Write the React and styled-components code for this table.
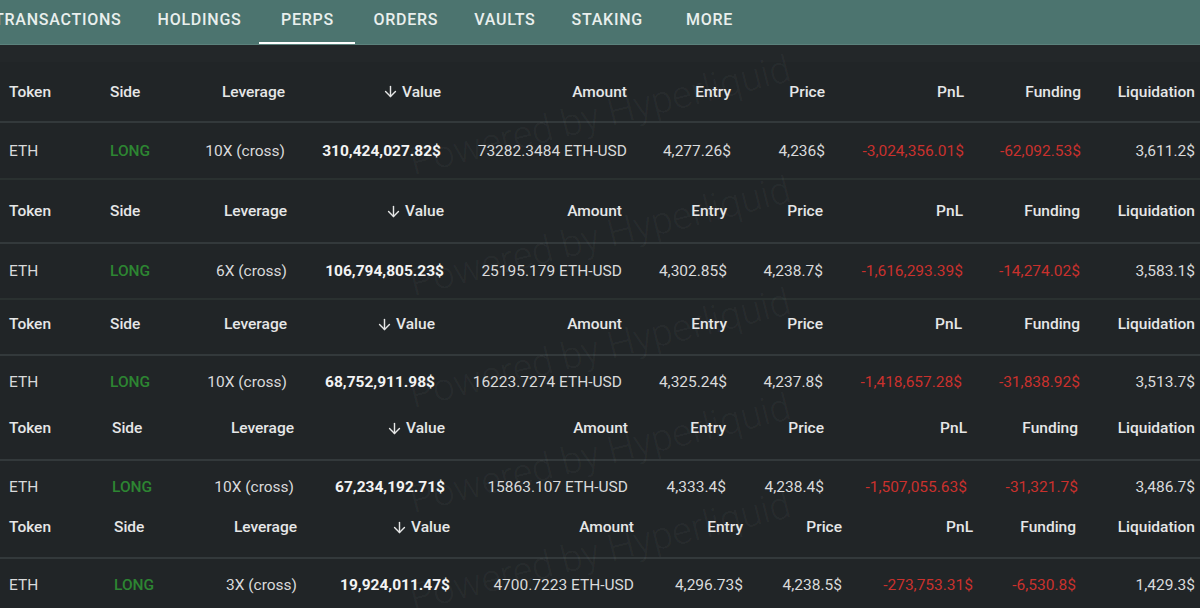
import React from 'react'
import styled, { createGlobalStyle } from 'styled-components'
import { ArrowDown } from 'lucide-react'

const GlobalStyle = createGlobalStyle`
  html, body {
    margin: 0;
    padding: 0;
    background: #212527;
    font-family: Roboto, "Liberation Sans", sans-serif;
  }
  body { overflow: hidden; }
`

const Page = styled.div`
  width: 1200px;
  height: 608px;
  overflow: hidden;
  background: #212527;
`

const TabBar = styled.nav`
  height: 45px;
  display: flex;
  align-items: stretch;
  background: #4c746f;
  border-bottom: 1px solid #5b827c;
  box-sizing: border-box;
  overflow: hidden;
`

const TabList = styled.div`
  display: flex;
  margin-left: -24px;
`

const Tab = styled.div`
  display: flex;
  align-items: center;
  justify-content: center;
  padding: 0 18px 4px;
  margin-left: ${p => p.extra || 0}px;
  font-size: 16px;
  font-weight: 500;
  letter-spacing: 0.75px;
  color: #e9efed;
  box-sizing: border-box;
  border-bottom: 3px solid ${p => (p.active ? '#ffffff' : 'transparent')};
  margin-bottom: -1px;
  min-width: ${p => (p.active ? '96px' : 'auto')};
`

const Band = styled.div`
  height: 17px;
  background: #232729;
`

const Block = styled.section`
  position: relative;
  border-top: ${p => (p.topLine ? '2px solid #2a3130' : 'none')};
`

const Row = styled.div`
  display: grid;
  grid-template-columns: ${p => p.cols};
  align-items: center;
  box-sizing: border-box;
  height: ${p => p.h}px;
  padding-bottom: ${p => p.padB || 0}px;
  font-size: 15.5px;
`

const Sep = styled.div`
  height: 2px;
  background: #33393b;
`

const HeadCell = styled.div`
  font-weight: 500;
  color: #e6e7e7;
  white-space: nowrap;
  padding-left: ${p => (p.first ? '9px' : '0')};
  display: flex;
  align-items: center;
  justify-content: ${p => (p.left ? 'flex-start' : 'flex-end')};
  gap: 3px;
`

const Cell = styled.div`
  color: ${p => p.color || '#d9dadb'};
  font-weight: ${p => p.weight || 400};
  white-space: nowrap;
  text-align: ${p => (p.left ? 'left' : 'right')};
  padding-left: ${p => (p.first ? '9px' : '0')};
`

const Watermark = styled.div`
  position: absolute;
  left: 600px;
  top: ${p => p.y}px;
  transform: translate(-50%, -50%) rotate(-14deg);
  font-size: 38px;
  font-weight: 300;
  color: rgba(255, 255, 255, 0.045);
  white-space: nowrap;
  pointer-events: none;
`

const GREEN = '#2d8632'
const RED = '#c9312d'

const blocks = [
  {
    side: 110, ends: [285, 441, 627, 731, 825, 964, 1081, 1195],
    headH: 59, padB: 0, dataH: 55, topLine: false,
    lev: '10X (cross)', value: '310,424,027.82$', amount: '73282.3484 ETH-USD',
    entry: '4,277.26$', price: '4,236$', pnl: '-3,024,356.01$', funding: '-62,092.53$', liq: '3,611.2$',
  },
  {
    side: 110, ends: [287, 444, 622, 727, 823, 963, 1080, 1195],
    headH: 62, padB: 0, dataH: 54, topLine: true,
    lev: '6X (cross)', value: '106,794,805.23$', amount: '25195.179 ETH-USD',
    entry: '4,302.85$', price: '4,238.7$', pnl: '-1,616,293.39$', funding: '-14,274.02$', liq: '3,583.1$',
  },
  {
    side: 110, ends: [287, 435, 622, 727, 823, 962, 1080, 1195],
    headH: 54, padB: 6, dataH: 52, topLine: true,
    lev: '10X (cross)', value: '68,752,911.98$', amount: '16223.7274 ETH-USD',
    entry: '4,325.24$', price: '4,237.8$', pnl: '-1,418,657.28$', funding: '-31,838.92$', liq: '3,513.7$',
  },
  {
    side: 112, ends: [294, 445, 628, 726, 824, 967, 1078, 1195],
    headH: 51, padB: 11, dataH: 52, topLine: false,
    lev: '10X (cross)', value: '67,234,192.71$', amount: '15863.107 ETH-USD',
    entry: '4,333.4$', price: '4,238.4$', pnl: '-1,507,055.63$', funding: '-31,321.7$', liq: '3,486.7$',
  },
  {
    side: 114, ends: [297, 450, 634, 743, 842, 973, 1076, 1195],
    headH: 44, padB: 16, dataH: 52, topLine: false,
    lev: '3X (cross)', value: '19,924,011.47$', amount: '4700.7223 ETH-USD',
    entry: '4,296.73$', price: '4,238.5$', pnl: '-273,753.31$', funding: '-6,530.8$', liq: '1,429.3$',
  },
]

// grid columns from the left edge of Side and the right edges of the other columns
const columnsFor = (side, ends) => {
  const widths = [side, 60]
  let prev = side + 60
  ends.forEach(e => {
    widths.push(e - prev)
    prev = e
  })
  widths.push(1200 - prev)
  return widths.map(w => `${w}px`).join(' ')
}

const tabs = [
  { label: 'TRANSACTIONS' },
  { label: 'HOLDINGS' },
  { label: 'PERPS', active: true },
  { label: 'ORDERS' },
  { label: 'VAULTS' },
  { label: 'STAKING' },
  { label: 'MORE', extra: 7 },
]

const PerpBlock = ({ b }) => {
  const cols = columnsFor(b.side, b.ends)
  return (
    <Block topLine={b.topLine}>
      <Row cols={cols} h={b.headH} padB={b.padB}>
        <HeadCell left first>Token</HeadCell>
        <HeadCell left>Side</HeadCell>
        <HeadCell>Leverage</HeadCell>
        <HeadCell><ArrowDown size={17} strokeWidth={2} />Value</HeadCell>
        <HeadCell>Amount</HeadCell>
        <HeadCell>Entry</HeadCell>
        <HeadCell>Price</HeadCell>
        <HeadCell>PnL</HeadCell>
        <HeadCell>Funding</HeadCell>
        <HeadCell>Liquidation</HeadCell>
        <div />
      </Row>
      <Sep />
      <Row cols={cols} h={b.dataH}>
        <Cell left first>ETH</Cell>
        <Cell left color={GREEN} weight={500}>LONG</Cell>
        <Cell>{b.lev}</Cell>
        <Cell color="#f3f3f3" weight={700}>{b.value}</Cell>
        <Cell>{b.amount}</Cell>
        <Cell>{b.entry}</Cell>
        <Cell>{b.price}</Cell>
        <Cell color={RED}>{b.pnl}</Cell>
        <Cell color={RED}>{b.funding}</Cell>
        <Cell>{b.liq}</Cell>
        <div />
      </Row>
      <Watermark y={b.headH - 6}>Powered by Hyperliquid</Watermark>
    </Block>
  )
}

export default function App() {
  return (
    <Page>
      <GlobalStyle />
      <TabBar>
        <TabList>
          {tabs.map(t => (
            <Tab key={t.label} active={t.active} extra={t.extra}>{t.label}</Tab>
          ))}
        </TabList>
      </TabBar>
      <Band />
      {blocks.map((b, i) => (
        <PerpBlock key={i} b={b} />
      ))}
    </Page>
  )
}
